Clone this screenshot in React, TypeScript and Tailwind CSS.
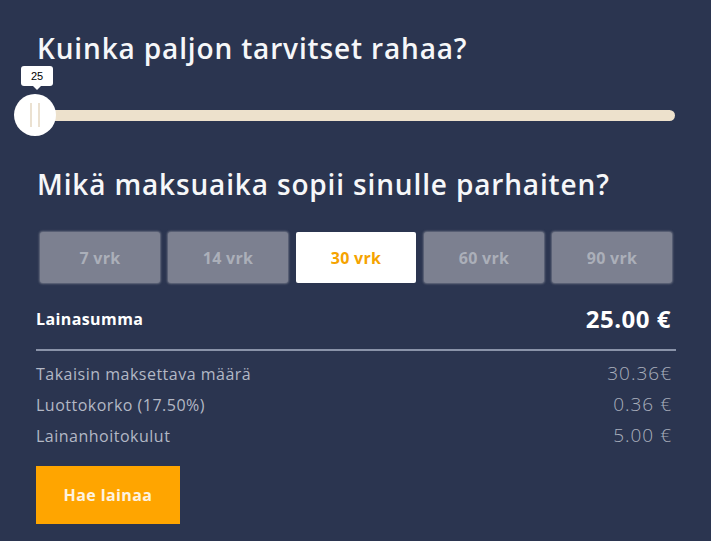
const terms = ["7 vrk", "14 vrk", "30 vrk", "60 vrk", "90 vrk"];

const rows = [
  { label: "Takaisin maksettava määrä", value: "30.36€" },
  { label: "Luottokorko (17.50%)", value: "0.36 €" },
  { label: "Lainanhoitokulut", value: "5.00 €" },
];

export default function App() {
  return (
    <div className="min-h-screen w-[711px] h-[541px] overflow-hidden bg-[#2b3550] text-white [font-family:'Open_Sans',sans-serif]">
      <div className="px-[36px] pt-[31px]">
        <h1 className="text-[28px] leading-[34px] font-semibold tracking-[0.85px] text-[#f6f7f9] pl-[1px]">Kuinka paljon tarvitset rahaa?</h1>

        {/* slider */}
        <div className="relative h-[102px] -ml-[22px]">
          <div className="absolute left-[14px] right-0 top-[45px] h-[11px] rounded-full bg-[#ede1cc]" />
          <div className="absolute left-[7px] top-[1px] flex w-[32px] flex-col items-center">
            <div className="flex h-[20px] w-[32px] items-center justify-center rounded-[3px] bg-white text-[11px] text-black [font-family:'Liberation_Sans',sans-serif]">25</div>
            <div className="h-0 w-0 border-x-[4px] border-t-[4px] border-x-transparent border-t-white" />
          </div>
          <div className="absolute left-0 top-[29px] flex h-[42px] w-[42px] items-center justify-center gap-[6px] rounded-full bg-white">
            <div className="h-[24px] w-[2px] bg-[#ebe1d1]" />
            <div className="h-[24px] w-[2px] bg-[#ebe1d1]" />
          </div>
        </div>

        <h2 className="text-[28px] leading-[34px] font-semibold tracking-[0.85px] text-[#f6f7f9] pl-[1px]">Mikä maksuaika sopii sinulle parhaiten?</h2>

        <div className="mt-[31px] flex gap-[8px] pl-[4px]">
          {terms.map((t) =>
            t === "30 vrk" ? (
              <div key={t} className="flex h-[51px] w-[120px] items-center justify-center rounded-[2px] bg-white text-[16px] font-bold tracking-[0.3px] text-[#f5a300]">{t}</div>
            ) : (
              <div key={t} className="flex h-[51px] w-[120px] items-center justify-center rounded-[3px] bg-[#7c8090] text-[16px] font-bold tracking-[0.3px] text-[#abafb9] shadow-[0_0_2px_1px_rgba(120,125,140,0.8)]">{t}</div>
            )
          )}
        </div>

        <div className="mt-[22px] flex items-end justify-between pr-[4px]">
          <span className="text-[16px] font-bold leading-[28px] tracking-[0.4px]">Lainasumma</span>
          <span className="text-[24px] font-bold leading-[28px] tracking-[0.5px]">25.00 €</span>
        </div>
        <div className="mt-[16px] h-[2px] bg-[#8a93a9] mr-[-1px]" />

        <div className="mt-[7px] flex flex-col pr-[3px]">
          {rows.map((r) => (
            <div key={r.label} className="flex h-[31px] items-center justify-between">
              <span className="text-[16px] tracking-[0.5px] text-[#b3b8c5]">{r.label}</span>
              <span className="text-[19px] font-light tracking-[1px] text-[#a9afbc]">{r.value}</span>
            </div>
          ))}
        </div>

        <button className="mt-[15px] flex h-[58px] w-[144px] items-center justify-center bg-[#ffa500] text-[16px] font-bold tracking-[0.4px] text-[#fdf3e0]">Hae lainaa</button>
      </div>
    </div>
  );
}
